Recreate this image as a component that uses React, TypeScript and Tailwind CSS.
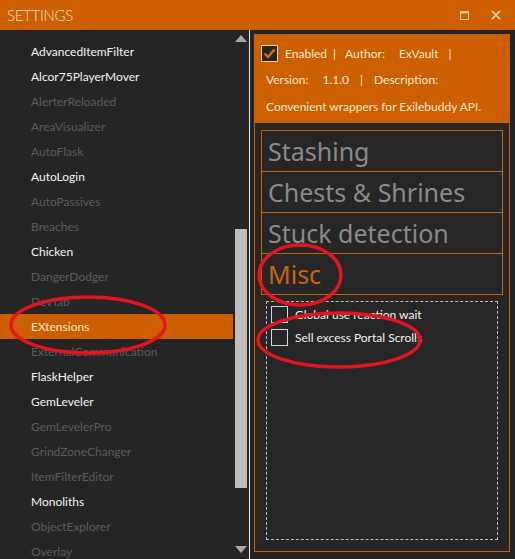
import React from "react";

const items: { name: string; on: boolean }[] = [
  { name: "AdvancedItemFilter", on: true },
  { name: "Alcor75PlayerMover", on: true },
  { name: "AlerterReloaded", on: false },
  { name: "AreaVisualizer", on: false },
  { name: "AutoFlask", on: false },
  { name: "AutoLogin", on: true },
  { name: "AutoPassives", on: false },
  { name: "Breaches", on: false },
  { name: "Chicken", on: true },
  { name: "DangerDodger", on: false },
  { name: "DevTab", on: false },
  { name: "EXtensions", on: true },
  { name: "ExternalCommunication", on: false },
  { name: "FlaskHelper", on: true },
  { name: "GemLeveler", on: true },
  { name: "GemLevelerPro", on: false },
  { name: "GrindZoneChanger", on: false },
  { name: "ItemFilterEditor", on: false },
  { name: "Monoliths", on: true },
  { name: "ObjectExplorer", on: false },
  { name: "Overlay", on: false },
];

const font = { fontFamily: "Lato, 'Noto Sans', sans-serif" };

export default function App() {
  return (
    <div
      className="relative w-[515px] h-[559px] overflow-hidden bg-[#232323] flex flex-col"
      style={font}
    >
      {/* Title bar */}
      <div className="h-[30px] shrink-0 bg-[#cc5f00] flex items-center pl-[7px]">
        <span className="text-[15px] text-[#fbe3cc] tracking-[-0.3px] font-light">SETTINGS</span>
        <div className="ml-auto flex items-center gap-[22px] pr-[14px]">
          <svg width="9" height="9" viewBox="0 0 9 9">
            <rect x="0.5" y="0.5" width="8" height="8" fill="none" stroke="#f7c89a" strokeWidth="1" />
            <rect x="0.5" y="0.5" width="8" height="2" fill="#f7c89a" />
          </svg>
          <svg width="10" height="10" viewBox="0 0 10 10">
            <path d="M1 1 L9 9 M9 1 L1 9" stroke="#f7d7b5" strokeWidth="1.6" />
          </svg>
        </div>
      </div>

      <div className="flex flex-1 min-h-0">
        {/* Left list */}
        <div className="w-[233px] bg-[#252525] overflow-hidden pt-[9px] flex flex-col">
          {items.map((it) => {
            const sel = it.name === "EXtensions";
            return (
              <div
                key={it.name}
                className={
                  "h-[25px] shrink-0 flex items-center pl-[31px] text-[12px] " +
                  (sel
                    ? "bg-[#cc5f00] text-[#fbe6d2]"
                    : it.on
                    ? "text-[#f2f2f2]"
                    : "text-[#5c5c5c]")
                }
              >
                {it.name}
              </div>
            );
          })}
        </div>
        {/* Scrollbar */}
        <div className="w-[16px] bg-[#252525] flex flex-col items-center pt-[5px] pb-[6px]">
          <svg width="12" height="7" viewBox="0 0 12 7" className="shrink-0">
            <path d="M0 7 L6 0 L12 7 Z" fill="#a8a8a8" />
          </svg>
          <div className="flex-1 w-[12px] flex flex-col pt-[187px] pb-[58px]">
            <div className="flex-1 bg-[#bdbdbd]" />
          </div>
          <svg width="12" height="7" viewBox="0 0 12 7" className="shrink-0">
            <path d="M0 0 L12 0 L6 7 Z" fill="#a8a8a8" />
          </svg>
        </div>
        <div className="w-px bg-[#e8e8e8]" />

        {/* Right panel */}
        <div className="flex-1 bg-[#232323] pl-[4px] pt-[4px] pr-[5px] pb-[7px] flex">
          <div className="flex-1 border border-[#c8620a] bg-[#262626] flex flex-col">
            <div className="h-[88px] bg-[#cc5f00] text-[12px] text-[#fbe6d2] pl-[6px] pt-[10px] flex flex-col">
              <div className="flex items-center h-[17px]">
                <div className="w-[17px] h-[17px] border border-[#f0c9a0] bg-[#2a2420] flex items-center justify-center">
                  <svg width="13" height="11" viewBox="0 0 13 11">
                    <path d="M1.5 5.5 L5 9 L11.5 1.5" fill="none" stroke="#d96a10" strokeWidth="2.4" />
                  </svg>
                </div>
                <span className="ml-[7px]">Enabled</span>
                <span className="ml-[6px]">|</span>
                <span className="ml-[9px]">Author:</span>
                <span className="ml-[14px]">ExVault</span>
                <span className="ml-[10px]">|</span>
              </div>
              <div className="flex items-center h-[17px] mt-[9px] pl-[5px]">
                <span>Version:</span>
                <span className="ml-[14px]">1.1.0</span>
                <span className="ml-[11px]">|</span>
                <span className="ml-[11px]">Description:</span>
              </div>
              <div className="flex items-center h-[17px] mt-[10px] pl-[5px]">
                Convenient wrappers for Exilebuddy API.
              </div>
            </div>
            <div className="flex-1 flex flex-col px-[6px] pt-[7px] pb-[11px]">
              {["Stashing", "Chests & Shrines", "Stuck detection", "Misc"].map((t, i) => (
                <div
                  key={t}
                  className={
                    "h-[42px] border border-[#c8620a] flex items-center pl-[6px] text-[25px] leading-none " +
                    (i > 0 ? "mt-[-1px] " : "") +
                    (t === "Misc" ? "text-[#c8650f]" : "text-[#8a8a8a]")
                  }
                  style={{ fontFamily: "'Noto Sans', sans-serif" }}
                >
                  {t}
                </div>
              ))}
              <div className="flex-1 mt-[6px] mx-[5px] border border-dashed border-[#bfbfbf] pt-[4px] pl-[4px] flex flex-col gap-[6px]">
                {["Global use reaction wait", "Sell excess Portal Scrolls"].map((t) => (
                  <div key={t} className="flex items-center h-[17px]">
                    <div className="w-[17px] h-[17px] border border-[#d8d8d8]" />
                    <span className="ml-[7px] text-[12px] text-[#f2f2f2]">{t}</span>
                  </div>
                ))}
              </div>
            </div>
          </div>
        </div>
      </div>

      {/* Red annotation circles */}
      <svg className="absolute inset-0 pointer-events-none" width="515" height="559">
        <ellipse cx="88" cy="325" rx="77" ry="28" fill="none" stroke="#e3141e" strokeWidth="3.5" />
        <ellipse cx="300" cy="275" rx="41" ry="30" fill="none" stroke="#e3141e" strokeWidth="3.5" />
        <ellipse cx="339" cy="340" rx="81" ry="27" fill="none" stroke="#e3141e" strokeWidth="3.5" />
      </svg>
    </div>
  );
}
